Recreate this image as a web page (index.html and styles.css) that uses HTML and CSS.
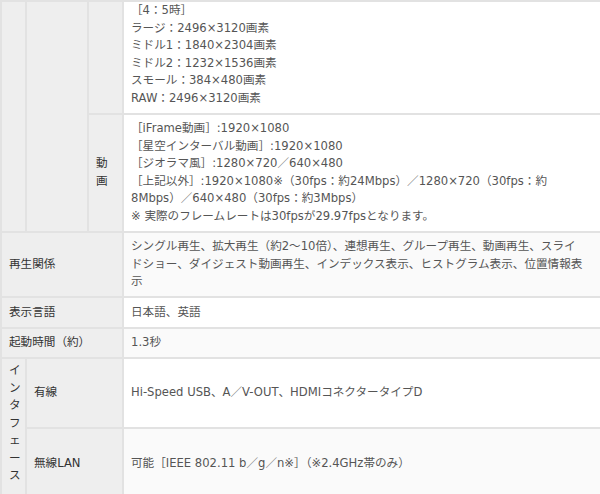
FILE: index.html
```html
<!DOCTYPE html>
<html lang="ja">
<head>
<meta charset="utf-8">
<link rel="stylesheet" href="styles.css">
</head>
<body>
<table class="spec">
  <colgroup>
    <col class="c1"><col class="c2"><col class="c3"><col class="c4">
  </colgroup>
  <tbody>
    <tr class="first">
      <th rowspan="2" class="blank"></th>
      <th rowspan="2" class="blank"></th>
      <th class="blank"></th>
      <td class="white">［4：5時］<br>ラージ：2496×3120画素<br>ミドル1：1840×2304画素<br>ミドル2：1232×1536画素<br>スモール：384×480画素<br>RAW：2496×3120画素</td>
    </tr>
    <tr>
      <th class="vert">動<br>画</th>
      <td class="white">［iFrame動画］:1920×1080<br>［星空インターバル動画］:1920×1080<br>［ジオラマ風］:1280×720／640×480<br>［上記以外］:1920×1080※（30fps：約24Mbps）／1280×720（30fps：約8Mbps）／640×480（30fps：約3Mbps）<br>※ 実際のフレームレートは30fpsが29.97fpsとなります。</td>
    </tr>
    <tr>
      <th colspan="3">再生関係</th>
      <td class="grey">シングル再生、拡大再生（約2〜10倍）、連想再生、グループ再生、動画再生、スライドショー、ダイジェスト動画再生、インデックス表示、ヒストグラム表示、位置情報表示</td>
    </tr>
    <tr>
      <th colspan="3">表示言語</th>
      <td class="white">日本語、英語</td>
    </tr>
    <tr>
      <th colspan="3">起動時間（約）</th>
      <td class="grey">1.3秒</td>
    </tr>
    <tr>
      <th rowspan="2" class="vert iface">イ<br>ン<br>タ<br>フ<br>ェ<br>ー<br>ス</th>
      <th colspan="2">有線</th>
      <td class="white">Hi-Speed USB、A／V-OUT、HDMIコネクタータイプD</td>
    </tr>
    <tr>
      <th colspan="2">無線LAN</th>
      <td class="grey">可能［IEEE 802.11 b／g／n※］（※2.4GHz帯のみ）</td>
    </tr>
  </tbody>
</table>
</body>
</html>
```
FILE: styles.css
```css
html, body {
  margin: 0;
  padding: 0;
  background: #ffffff;
}
body {
  font-family: "DejaVu Sans", "Noto Sans CJK JP", sans-serif;
  font-size: 11.6px;
  line-height: 17.5px;
  color: #555555;
}
.spec {
  border-collapse: collapse;
  width: 606px;
  table-layout: fixed;
}
.c1 { width: 25px; }
.c2 { width: 62px; }
.c3 { width: 35px; }
.c4 { width: auto; }
.spec th, .spec td {
  border: 2px solid #e2e2e2;
  padding: 5.5px 7px;
  vertical-align: middle;
  text-align: left;
  font-weight: normal;
}
.spec td {
  padding-right: 19px;
}
.spec th {
  background: #eeeeee;
  color: #333333;
}
.spec th.vert {
  padding: 5px 7px;
}
.spec th.iface {
  vertical-align: top;
  padding: 3px 7px 13px;
}
.spec td.white { background: #ffffff; }
.spec td.grey { background: #fafafa; }
.spec tr.first td { padding-top: 0; }
```
